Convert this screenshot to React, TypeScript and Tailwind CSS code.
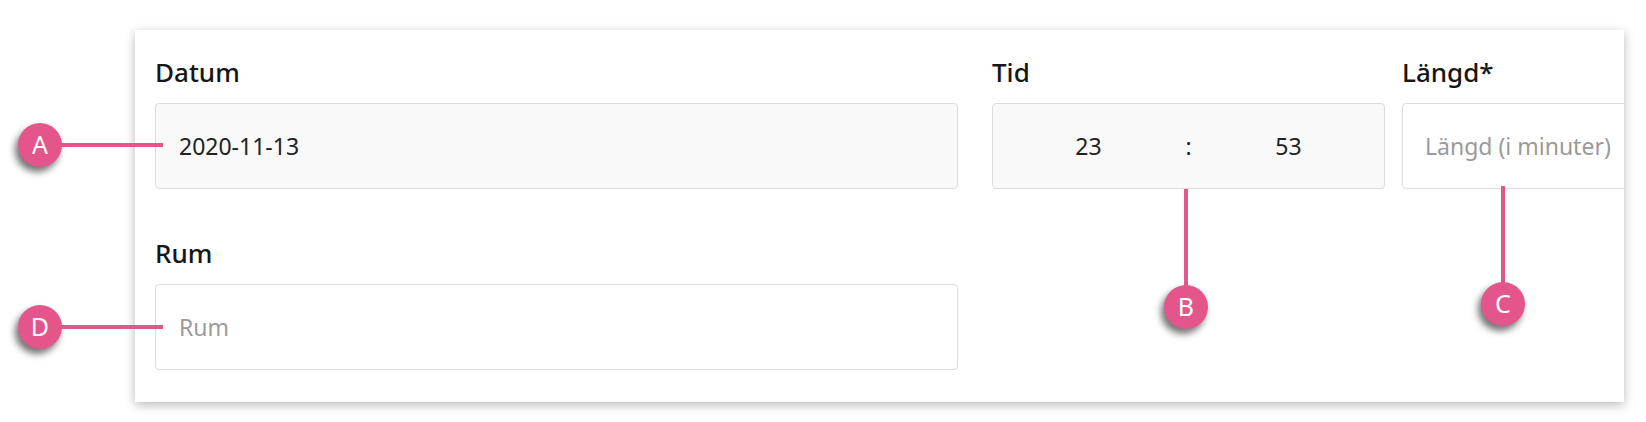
import React from "react";

const font = { fontFamily: '"Noto Sans", "Open Sans", sans-serif' };

function Field({
  label,
  width,
  filled,
  children,
}: {
  label: string;
  width: string;
  filled?: boolean;
  children: React.ReactNode;
}) {
  return (
    <div className={`${width} shrink-0 flex flex-col gap-[13px]`}>
      <div className="text-[26px] leading-[36px] font-medium text-[#161616]">{label}</div>
      <div
        className={`h-[86px] rounded-[4px] border border-[#dcdcdc] flex items-center text-[23px] ${
          filled ? "bg-[#f9f9f9] text-[#222]" : "bg-white text-[#9a9a9a]"
        }`}
      >
        {children}
      </div>
    </div>
  );
}

function Badge({ letter }: { letter: string }) {
  return (
    <div className="w-[44px] h-[44px] shrink-0 rounded-full bg-[#e3558b] text-white flex items-center justify-center text-[25px] shadow-[-3px_5px_7px_rgba(0,0,0,0.55)]">
      {letter}
    </div>
  );
}

// callout pointing right, into a field
function SideMarker({ letter, className }: { letter: string; className: string }) {
  return (
    <div className={`absolute flex items-center ${className}`}>
      <Badge letter={letter} />
      <div className="-ml-[4px] w-[105px] h-[4px] bg-[#e3558b]" />
    </div>
  );
}

// callout hanging below a field
function DropMarker({ letter, className }: { letter: string; className: string }) {
  return (
    <div className={`absolute flex flex-col items-center ${className}`}>
      <div className="w-[4px] h-[100px] -mb-[4px] bg-[#e3558b]" />
      <Badge letter={letter} />
    </div>
  );
}

export default function App() {
  return (
    <div className="relative w-[1646px] h-[422px] bg-white overflow-hidden" style={font}>
      <div className="pl-[135px] pt-[30px]">
        <div className="w-[1489px] h-[372px] bg-white overflow-hidden shadow-[0_3px_10px_rgba(0,0,0,0.28)] pl-5 pt-6 flex flex-col gap-[46px]">
          <div className="flex gap-[34px]">
            <Field label="Datum" width="w-[803px]" filled>
              <span className="pl-[23px]">2020-11-13</span>
            </Field>
            <div className="flex gap-[17px]">
              <Field label="Tid" width="w-[393px]" filled>
                <div className="flex w-full justify-center">
                  <span className="w-[100px] text-center">23</span>
                  <span className="w-[100px] text-center">:</span>
                  <span className="w-[100px] text-center">53</span>
                </div>
              </Field>
              <Field label="Längd*" width="w-[393px]">
                <span className="pl-[22px]">Längd (i minuter)</span>
              </Field>
            </div>
          </div>

          <Field label="Rum" width="w-[803px]">
            <span className="pl-[23px]">Rum</span>
          </Field>
        </div>
      </div>

      {/* annotation callouts */}
      <SideMarker letter="A" className="left-[18px] top-[123px]" />
      <SideMarker letter="D" className="left-[18px] top-[305px]" />
      <DropMarker letter="B" className="left-[1164px] top-[189px]" />
      <DropMarker letter="C" className="left-[1481px] top-[186px]" />
    </div>
  );
}
